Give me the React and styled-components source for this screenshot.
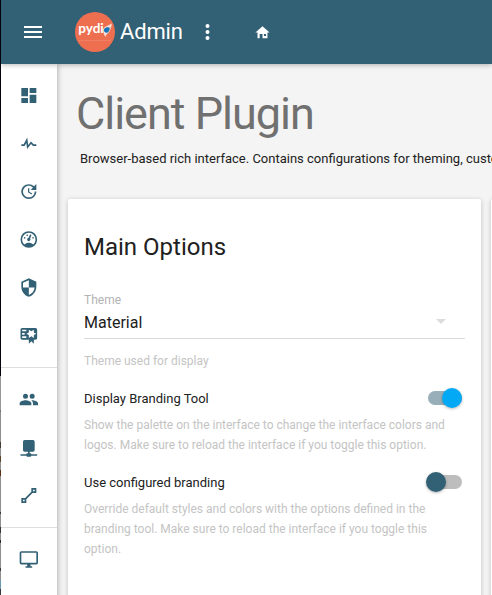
import React from 'react';
import styled, { createGlobalStyle } from 'styled-components';

const GlobalStyle = createGlobalStyle`
  * { box-sizing: border-box; }
  body { margin: 0; font-family: Roboto, "Liberation Sans", sans-serif; color: #212121; overflow: hidden; }
`;

const Window = styled.div`
  display: grid;
  grid-template-columns: 1px 1fr;
  width: 492px;
  height: 595px;
  overflow: hidden;
`;

const DesktopEdge = styled.div`
  background: linear-gradient(#050510 0 376px, #b4b4b4 376px 410px, #8b8b8b 410px 412px,
    #a9a9a9 412px 442px, #4d4637 442px 448px, #aaa 448px 456px, #6a5230 456px 462px,
    #aaa 462px 470px, #6b3a18 470px 476px, #aaa 476px 512px, #444 512px 514px,
    #aaa 514px 527px, #40413f 527px 533px, #aaa 533px 540px, #333 540px 543px,
    #aaa 543px 568px, #444 568px 571px, #aaa 571px 580px, #7eb2d1 580px 589px, #444 589px);
`;

const Frame = styled.div`
  display: grid;
  grid-template: 64px 1fr / 56px 1fr;
  min-width: 0;
  background: #f4f4f4;
`;

const Header = styled.header`
  grid-column: 1 / -1;
  z-index: 2;
  display: flex;
  align-items: center;
  padding-left: 20px;
  background: #326074;
  color: #fff;
  box-shadow: 0 1px 5px rgba(0, 0, 0, 0.28);
`;

const Logo = styled.svg`
  width: 40px;
  height: 40px;
  margin-left: 30px;
`;

const Brand = styled.span`
  width: 75px;
  margin-left: 5px;
  font-size: 22px;
  line-height: 40px;
  letter-spacing: -0.15px;
`;

const Glyph = styled.svg`
  flex: none;
  display: block;
  width: ${p => p.$size}px;
  height: ${p => p.$size}px;
  fill: currentColor;
`;

const HomeLink = styled.div`
  margin: 1px 0 0 35px;
`;

const Sidebar = styled.nav`
  z-index: 1;
  background: #fff;
  color: #326074;
  box-shadow: 0 0 6px rgba(0, 0, 0, 0.36);
`;

const NavGroup = styled.div`
  padding: 8px 0 7px;
  border-bottom: 1px solid #dedede;
  &:last-child { border-bottom: 0; }
`;

const NavItem = styled.div`
  display: grid;
  place-items: center;
  height: 48px;
`;

const Content = styled.main`
  min-width: 0;
  overflow: hidden;
`;

const Title = styled.h1`
  margin: 22px 0 0 19px;
  font-size: 45px;
  font-weight: 400;
  line-height: 56px;
  letter-spacing: -1.02px;
  color: #707070;
`;

const Summary = styled.p`
  margin: 7px 0 0 23px;
  font-size: 13px;
  line-height: 20px;
  white-space: nowrap;
`;

const Cards = styled.div`
  display: flex;
  gap: 10px;
  margin: 30px 0 0 11px;
`;

const Card = styled.section`
  flex: none;
  width: 413px;
  height: 410px;
  padding: 32px 16px 0;
  border-radius: 2px;
  background: #fff;
  box-shadow: 0 1px 5px rgba(0, 0, 0, 0.22);
`;

const Heading = styled.h2`
  margin: 0;
  font-size: 24px;
  font-weight: 400;
  line-height: 32px;
`;

const FieldLabel = styled.div`
  margin-top: 29px;
  font-size: 12px;
  line-height: 16px;
  color: #b3b3b3;
`;

const Select = styled.div`
  display: flex;
  justify-content: space-between;
  align-items: center;
  width: 381px;
  height: 31px;
  padding: 0 12px 2px 0;
  border-bottom: 1px solid #dcdcdc;
  font-size: 16px;
  color: #1c1c1c;
`;

const Arrow = styled.span`
  display: flex;
  margin-top: -2px;
  color: #dcdcdc;
`;

const Help = styled.p`
  margin: ${p => p.$top}px 0 0;
  font-size: 12px;
  line-height: 20px;
  white-space: nowrap;
  color: #c4c4c4;
`;

const OptionRow = styled.div`
  display: flex;
  justify-content: space-between;
  align-items: center;
  height: 24px;
  margin-top: ${p => p.$top}px;
  padding-right: 3px;
  font-size: 13px;
`;

const Track = styled.span`
  display: flex;
  align-items: center;
  justify-content: ${p => (p.$on ? 'flex-end' : 'flex-start')};
  width: 34px;
  height: 14px;
  border-radius: 7px;
  background: ${p => (p.$on ? '#98afb9' : '#bdbdbd')};
`;

const Thumb = styled.span`
  flex: none;
  width: 20px;
  height: 20px;
  margin-left: -2px;
  border-radius: 50%;
  background: ${p => (p.$on ? '#03a9f4' : '#326074')};
  box-shadow: 0 1px 3px rgba(0, 0, 0, 0.28);
`;

const paths = {
  menu: 'M3,6H21V8H3V6M3,11H21V13H3V11M3,16H21V18H3V16Z',
  dots: 'M12,16A2,2 0 0,1 14,18A2,2 0 0,1 12,20A2,2 0 0,1 10,18A2,2 0 0,1 12,16M12,10A2,2 0 0,1 14,12A2,2 0 0,1 12,14A2,2 0 0,1 10,12A2,2 0 0,1 12,10M12,4A2,2 0 0,1 14,6A2,2 0 0,1 12,8A2,2 0 0,1 10,6A2,2 0 0,1 12,4Z',
  home: 'M8,20H5V12H2L12,3L22,12H19V20H12V14H8V20M14,14V17H17V14H14Z',
  arrow: 'M7,10L12,15L17,10H7Z',
  dashboard: 'M13,3V9H21V3M13,21H21V11H13M3,21H11V15H3M3,13H11V3H3V13Z',
  pulse: 'M3,13H5.79L10.1,4.79L11.28,13.75L14.5,9.66L17.83,13H21V15H17L14.67,12.67L9.92,18.73L8.94,11.31L7,15H3V13Z',
  update: 'M21,10.12H14.22L16.96,7.3C14.23,4.6 9.81,4.5 7.08,7.2C4.35,9.91 4.35,14.28 7.08,17C9.81,19.7 14.23,19.7 16.96,17C18.32,15.65 19,14.08 19,12.1H21C21,14.08 20.12,16.65 18.36,18.39C14.85,21.87 9.15,21.87 5.64,18.39C2.14,14.92 2.11,9.28 5.62,5.81C9.13,2.34 14.76,2.34 18.27,5.81L21,3V10.12M12.5,8V12.25L16,14.33L15.28,15.54L11,13V8H12.5Z',
  gauge: 'M12,2A10,10 0 0,0 2,12A10,10 0 0,0 12,22A10,10 0 0,0 22,12A10,10 0 0,0 12,2M12,4A8,8 0 0,1 20,12C20,14.4 19,16.5 17.3,18C15.9,16.7 14,16 12,16C10,16 8.2,16.7 6.7,18C5,16.5 4,14.4 4,12A8,8 0 0,1 12,4M14,5.89C13.62,5.9 13.26,6.15 13.1,6.54L11.81,9.77L11.71,10C11,10.13 10.41,10.6 10.14,11.26C9.73,12.29 10.23,13.45 11.26,13.86C12.29,14.27 13.45,13.77 13.86,12.74C14.12,12.08 14,11.32 13.57,10.76L13.67,10.5L14.96,7.29L14.97,7.26C15.17,6.75 14.92,6.17 14.41,5.96C14.28,5.91 14.15,5.89 14,5.89M10,6A1,1 0 0,0 9,7A1,1 0 0,0 10,8A1,1 0 0,0 11,7A1,1 0 0,0 10,6M7,9A1,1 0 0,0 6,10A1,1 0 0,0 7,11A1,1 0 0,0 8,10A1,1 0 0,0 7,9M17,9A1,1 0 0,0 16,10A1,1 0 0,0 17,11A1,1 0 0,0 18,10A1,1 0 0,0 17,9Z',
  shield: 'M12,12H19C18.47,16.11 15.72,19.78 12,20.92V12H5V6.3L12,3.19M12,1L3,5V11C3,16.55 6.84,21.73 12,23C17.16,21.73 21,16.55 21,11V5L12,1Z',
  certificate: 'M4,3C2.89,3 2,3.89 2,5V15A2,2 0 0,0 4,17H12V22L15,19L18,22V17H20A2,2 0 0,0 22,15V8L22,6V5A2,2 0 0,0 20,3H16V3H4M12,5L15,7L18,5V8.5L21,10L18,11.5V15L15,13L12,15V11.5L9,10L12,8.5V5M4,5H9V7H4V5M4,9H7V11H4V9M4,13H9V15H4V13Z',
  people: 'M16,13C15.71,13 15.38,13 15.03,13.05C16.19,13.89 17,15 17,16.5V19H23V16.5C23,14.17 18.33,13 16,13M8,13C5.67,13 1,14.17 1,16.5V19H15V16.5C15,14.17 10.33,13 8,13M8,11A3,3 0 0,0 11,8A3,3 0 0,0 8,5A3,3 0 0,0 5,8A3,3 0 0,0 8,11M16,11A3,3 0 0,0 19,8A3,3 0 0,0 16,5A3,3 0 0,0 13,8A3,3 0 0,0 16,11Z',
  network: 'M17,3A2,2 0 0,1 19,5V15A2,2 0 0,1 17,17H13V19H14A1,1 0 0,1 15,20H22V22H15A1,1 0 0,1 14,23H10A1,1 0 0,1 9,22H2V20H9A1,1 0 0,1 10,19H11V17H7C5.89,17 5,16.1 5,15V5A2,2 0 0,1 7,3H17Z',
  vector: 'M15,3V7.59L7.59,15H3V21H9V16.42L16.42,9H21V3M17,5H19V7H17M5,17H7V19H5',
  monitor: 'M21,16H3V4H21M21,2H3C1.89,2 1,2.89 1,4V16A2,2 0 0,0 3,18H10V20H8V22H16V20H14V18H21A2,2 0 0,0 23,16V4C23,2.89 22.1,2 21,2Z',
};

const Icon = ({ name, size = 20, box = '0 0 24 24' }) => (
  <Glyph $size={size} viewBox={box}>
    <path fillRule="evenodd" d={paths[name]} />
  </Glyph>
);

const PydioLogo = () => (
  <Logo viewBox="0 0 40 40">
    <circle cx="20" cy="20" r="20" fill="#ee6e50" />
    <text x="3.2" y="21.2" fill="#fff" fontFamily="Lato, sans-serif" fontSize="14" fontWeight="700" textLength="25.6" lengthAdjust="spacingAndGlyphs">pydi</text>
    <path d="M28 18.5C28.4 15.4 31 14.4 33 13.6L36.8 11.6C36.6 14.2 36 16.4 35 18.4C34 20.6 32.6 22 31.4 22.6L30.4 25L29 22.4Z" fill="#f9ddd5" />
    <path d="M28.8 19C28.6 16 31.2 14.6 34.2 15.4C35.2 17.6 33.4 20.8 30.8 20.8Z" fill="#1475bd" />
    <path d="M32.6 21.4L35 15.6" stroke="#4f7fa8" strokeWidth="0.7" />
    <path d="M4 28.5H36" stroke="#f28e77" strokeWidth="0.8" strokeDasharray="1.4 0.7" />
  </Logo>
);

const Toggle = ({ on }) => (
  <Track $on={on}>
    <Thumb $on={on} />
  </Track>
);

const groups = [
  ['dashboard', 'pulse', 'update', 'gauge', 'shield', 'certificate'],
  ['people', 'network', 'vector'],
  ['monitor'],
];

export default function App() {
  return (
    <>
      <GlobalStyle />
      <Window>
        <DesktopEdge />
        <Frame>
          <Header>
            <Icon name="menu" size={24} />
            <PydioLogo />
            <Brand>Admin</Brand>
            <Icon name="dots" size={24} box="-0.5 0 24 24" />
            <HomeLink><Icon name="home" size={17} /></HomeLink>
          </Header>
          <Sidebar>
            {groups.map(items => (
              <NavGroup key={items[0]}>
                {items.map(name => (
                  <NavItem key={name}><Icon name={name} box="0.2 0.6 24 24" /></NavItem>
                ))}
              </NavGroup>
            ))}
          </Sidebar>
          <Content>
            <Title>Client Plugin</Title>
            <Summary>Browser-based rich interface. Contains configurations for theming, custo</Summary>
            <Cards>
              <Card>
                <Heading>Main Options</Heading>
                <FieldLabel>Theme</FieldLabel>
                <Select>
                  Material
                  <Arrow><Icon name="arrow" size={24} /></Arrow>
                </Select>
                <Help $top={12}>Theme used for display</Help>
                <OptionRow $top={15}>Display Branding Tool<Toggle on /></OptionRow>
                <Help $top={5}>
                  Show the palette on the interface to change the interface colors and<br />
                  logos. Make sure to reload the interface if you toggle this option.
                </Help>
                <OptionRow $top={15}>Use configured branding<Toggle /></OptionRow>
                <Help $top={5}>
                  Override default styles and colors with the options defined in the<br />
                  branding tool. Make sure to reload the interface if you toggle this<br />
                  option.
                </Help>
              </Card>
              <Card />
            </Cards>
          </Content>
        </Frame>
      </Window>
    </>
  );
}
